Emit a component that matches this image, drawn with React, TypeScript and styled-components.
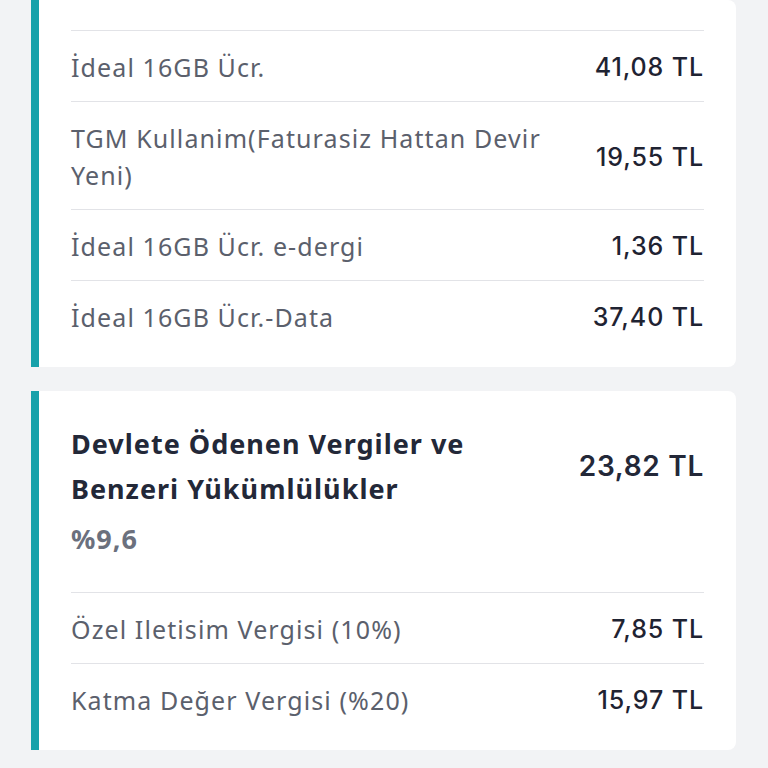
import React from "react";
import styled, { createGlobalStyle } from "styled-components";

const Global = createGlobalStyle`
  html, body { margin: 0; padding: 0; background: #f2f3f5; }
  body { font-family: "Noto Sans", sans-serif; -webkit-font-smoothing: antialiased; }
`;

const Page = styled.div`
  display: flex;
  flex-direction: column;
  gap: 24px;
  padding: 0 32px 20px 31px;
  height: 768px;
  overflow: hidden;
  box-sizing: border-box;
`;

const Card = styled.section<{ $top?: number }>`
  background: #ffffff;
  border-left: 8px solid #17a1aa;
  border-radius: 0 8px 8px 0;
  padding: ${(p) => p.$top ?? 0}px 32px 16px 32px;
`;

const Row = styled.div`
  display: flex;
  align-items: center;
  justify-content: space-between;
  gap: 24px;
  padding: 18px 0 15px;
  border-top: 1px solid #e2e3e7;
`;

const Label = styled.div`
  font-family: "Noto Sans", sans-serif;
  font-size: 25px;
  letter-spacing: 1.1px;
  line-height: 37px;
  color: #5b606c;
  max-width: 490px;
`;

const Value = styled.div`
  font-family: "Inter", sans-serif;
  font-size: 25px;
  font-weight: 500;
  letter-spacing: 0.9px;
  line-height: 37px;
  color: #1f2332;
  white-space: nowrap;
`;

const Header = styled.div`
  padding: 30px 0 31px;
`;

const HeaderTop = styled.div`
  display: flex;
  align-items: center;
  justify-content: space-between;
`;

const Title = styled.h2`
  margin: 0;
  font-family: "Noto Sans", sans-serif;
  font-size: 27px;
  font-weight: 700;
  letter-spacing: 1px;
  line-height: 45px;
  color: #232838;
  max-width: 440px;
`;

const HeaderValue = styled.div`
  font-family: "Inter", sans-serif;
  font-size: 28px;
  font-weight: 600;
  letter-spacing: 0.7px;
  color: #232838;
  white-space: nowrap;
`;

const Percent = styled.div`
  margin-top: 5px;
  font-family: "Noto Sans", sans-serif;
  font-size: 27px;
  font-weight: 700;
  letter-spacing: 1px;
  line-height: 45px;
  color: #6b707d;
`;

const items1 = [
  ["İdeal 16GB Ücr.", "41,08 TL"],
  ["TGM Kullanim(Faturasiz Hattan Devir Yeni)", "19,55 TL"],
  ["İdeal 16GB Ücr. e-dergi", "1,36 TL"],
  ["İdeal 16GB Ücr.-Data", "37,40 TL"],
];

const items2 = [
  ["Özel Iletisim Vergisi (10%)", "7,85 TL"],
  ["Katma Değer Vergisi (%20)", "15,97 TL"],
];

export default function App() {
  return (
    <>
      <Global />
      <Page>
        <Card $top={30}>
          {items1.map(([l, v]) => (
            <Row key={l}>
              <Label>{l}</Label>
              <Value>{v}</Value>
            </Row>
          ))}
        </Card>
        <Card>
          <Header>
            <HeaderTop>
              <Title>Devlete Ödenen Vergiler ve Benzeri Yükümlülükler</Title>
              <HeaderValue>23,82 TL</HeaderValue>
            </HeaderTop>
            <Percent>%9,6</Percent>
          </Header>
          {items2.map(([l, v]) => (
            <Row key={l}>
              <Label>{l}</Label>
              <Value>{v}</Value>
            </Row>
          ))}
        </Card>
      </Page>
    </>
  );
}
